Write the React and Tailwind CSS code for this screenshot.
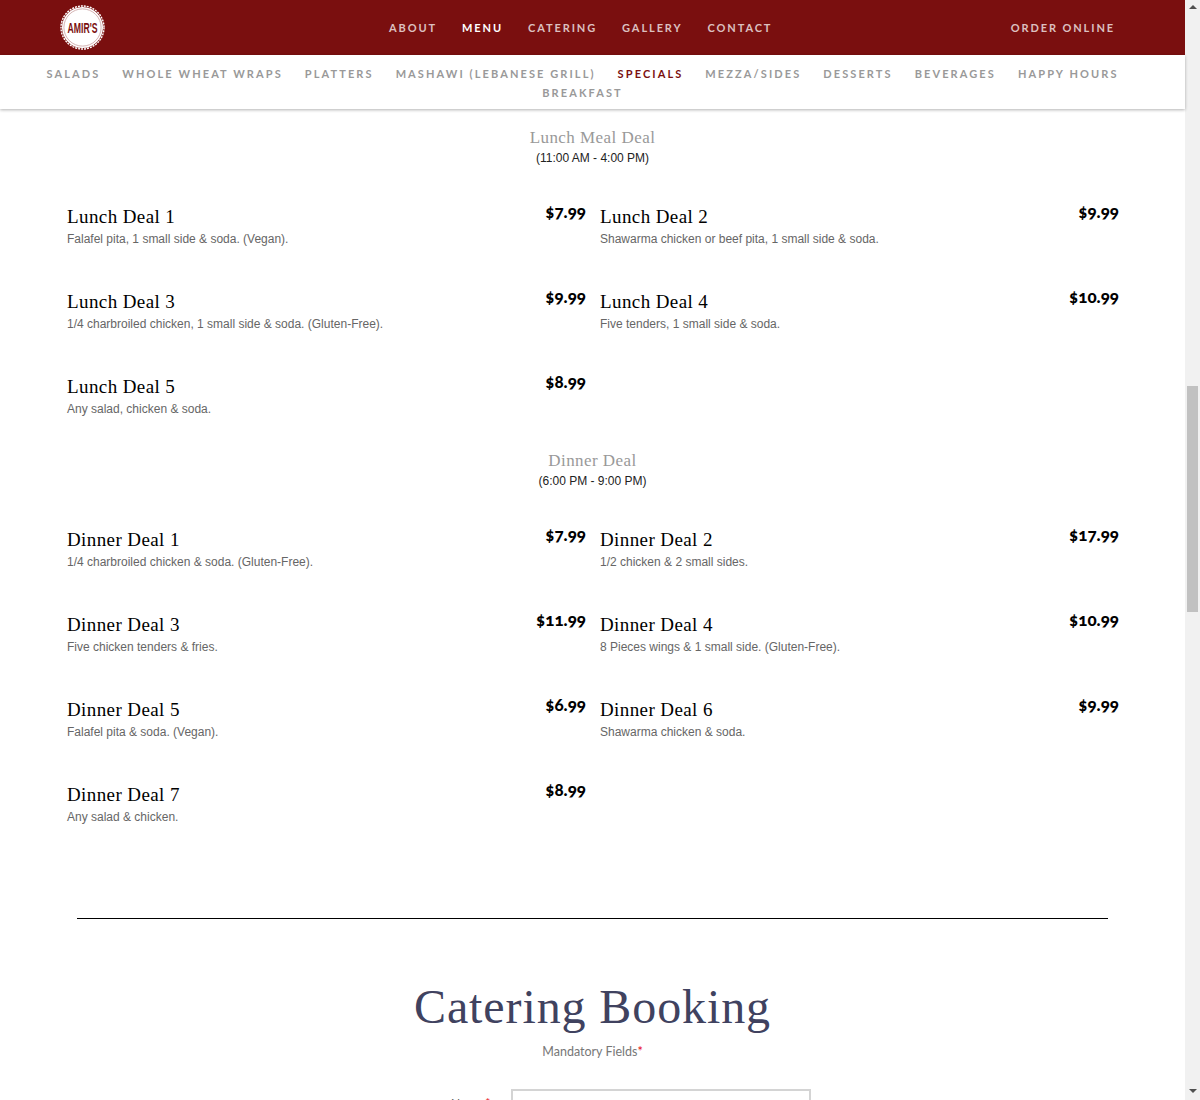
const mainNav = ["ABOUT", "MENU", "CATERING", "GALLERY", "CONTACT"];
const subNav = ["SALADS", "WHOLE WHEAT WRAPS", "PLATTERS", "MASHAWI (LEBANESE GRILL)", "SPECIALS", "MEZZA/SIDES", "DESSERTS", "BEVERAGES", "HAPPY HOURS", "BREAKFAST"];

const lunch = [
  { name: "Lunch Deal 1", desc: "Falafel pita, 1 small side & soda. (Vegan).", price: "$7.99" },
  { name: "Lunch Deal 2", desc: "Shawarma chicken or beef pita, 1 small side & soda.", price: "$9.99" },
  { name: "Lunch Deal 3", desc: "1/4 charbroiled chicken, 1 small side & soda. (Gluten-Free).", price: "$9.99" },
  { name: "Lunch Deal 4", desc: "Five tenders, 1 small side & soda.", price: "$10.99" },
  { name: "Lunch Deal 5", desc: "Any salad, chicken & soda.", price: "$8.99" },
];

const dinner = [
  { name: "Dinner Deal 1", desc: "1/4 charbroiled chicken & soda. (Gluten-Free).", price: "$7.99" },
  { name: "Dinner Deal 2", desc: "1/2 chicken & 2 small sides.", price: "$17.99" },
  { name: "Dinner Deal 3", desc: "Five chicken tenders & fries.", price: "$11.99" },
  { name: "Dinner Deal 4", desc: "8 Pieces wings & 1 small side. (Gluten-Free).", price: "$10.99" },
  { name: "Dinner Deal 5", desc: "Falafel pita & soda. (Vegan).", price: "$6.99" },
  { name: "Dinner Deal 6", desc: "Shawarma chicken & soda.", price: "$9.99" },
  { name: "Dinner Deal 7", desc: "Any salad & chicken.", price: "$8.99" },
];

const Logo = () => (
  <svg width="45" height="45" viewBox="0 0 45 45" className="shrink-0 overflow-visible">
    <circle cx="22.5" cy="22.5" r="20.5" fill="#fff" />
    <circle cx="22.5" cy="22.5" r="21.5" fill="none" stroke="#fff" strokeWidth="1.4" strokeDasharray="2 1" />
    <circle cx="22.5" cy="22.5" r="18.6" fill="none" stroke="#c9a0a0" strokeWidth="0.8" />
    <text x="22.5" y="28" textAnchor="middle" textLength="30" lengthAdjust="spacingAndGlyphs" fontFamily="Liberation Sans" fontSize="14" fontWeight="700" fill="#7a0f0f">AMIR'S</text>
  </svg>
);

const MenuItem = ({ item }) => (
  <div className="flex h-[85px] items-start justify-between">
    <div className="pt-[8px]">
      <h3 className="font-['Liberation_Serif'] text-[19px] leading-[26px] tracking-[0.4px] text-black">{item.name}</h3>
      <p className="mt-[1px] font-['Liberation_Sans'] text-xs leading-[16px] text-[#666]">{item.desc}</p>
    </div>
    <span className="pt-[4px] font-['Lato'] text-[17px] font-black leading-[24px] text-black oldstyle-nums">{item.price}</span>
  </div>
);

const Section = ({ title, time, items }) => (
  <section>
    <div className="text-center">
      <h2 className="font-['Liberation_Serif'] text-[17px] leading-[24px] tracking-[0.45px] text-[#999]">{title}</h2>
      <p className="-mt-px font-['Liberation_Sans'] text-xs leading-[18px] text-[#222]">{time}</p>
    </div>
    <div className="mt-[29px] grid grid-cols-2 gap-x-[14px] pl-[67px] pr-[66px]">
      {items.map((item) => (
        <MenuItem key={item.name} item={item} />
      ))}
    </div>
  </section>
);

const Scrollbar = () => (
  <div className="flex h-[1100px] w-[15px] shrink-0 flex-col items-center bg-[#f1f1f1]">
    <div className="mt-[5px] h-0 w-0 border-x-[4px] border-b-[4px] border-x-transparent border-b-[#505050]" />
    <div className="mt-[377px] h-[226px] w-[11px] bg-[#c1c1c1]" />
    <div className="mt-[477px] h-0 w-0 border-x-[4px] border-t-[4px] border-x-transparent border-t-[#505050]" />
  </div>
);

export default function App() {
  return (
    <div className="flex h-[1100px] w-[1200px] overflow-hidden bg-white">
      <div className="min-w-0 flex-1">
        <header className="flex h-[55px] items-center bg-[#7a0f0f] pl-[60px] pr-[70px]">
          <Logo />
          <nav className="ml-[284px] mt-[2px] flex gap-[25px] font-['Lato'] text-[11px] font-bold tracking-[1.9px]">
            {mainNav.map((link) => (
              <a key={link} className={link === "MENU" ? "text-white" : "text-[#dcc0c0]"}>{link}</a>
            ))}
          </nav>
          <a className="ml-auto mt-[2px] font-['Lato'] text-[11px] font-bold tracking-[1.9px] text-[#dcc0c0]">ORDER ONLINE</a>
        </header>

        <div className="relative flex h-[54px] flex-wrap content-start justify-center gap-x-[22px] pl-[20px] pr-[40px] pt-[9px] font-['Lato'] text-[11px] font-bold leading-[19px] tracking-[2.1px] shadow-[0_1px_3px_rgba(0,0,0,0.3)]">
          {subNav.map((link) => (
            <a key={link} className={link === "SPECIALS" ? "text-[#7a0f0f]" : "text-[#999]"}>{link}</a>
          ))}
        </div>

        <main className="pt-[17px]">
          <Section title="Lunch Meal Deal" time="(11:00 AM - 4:00 PM)" items={lunch} />
          <div className="-mt-[2px]">
            <Section title="Dinner Deal" time="(6:00 PM - 9:00 PM)" items={dinner} />
          </div>

          <hr className="mx-[77px] mt-[59px] border-t border-black" />

          <section className="pt-[56px] text-center">
            <h2 className="font-['Liberation_Serif'] text-[48px] leading-[64px] tracking-[0.9px] text-[#40425f]">Catering Booking</h2>
            <p className="mt-[4px] font-['Lato'] text-[12.5px] leading-[18px] text-[#777]">
              Mandatory Fields<span className="text-red-600">*</span>
            </p>
            <div className="mt-[28px] flex items-start pl-[451px]">
              <label className="w-[60px] pt-[6px] text-left font-['Lato'] text-xs text-[#555]">
                Name <span className="text-red-600">*</span>
              </label>
              <input className="h-[34px] w-[300px] border-2 border-[#d4d4d4]" />
            </div>
          </section>
        </main>
      </div>
      <Scrollbar />
    </div>
  );
}
